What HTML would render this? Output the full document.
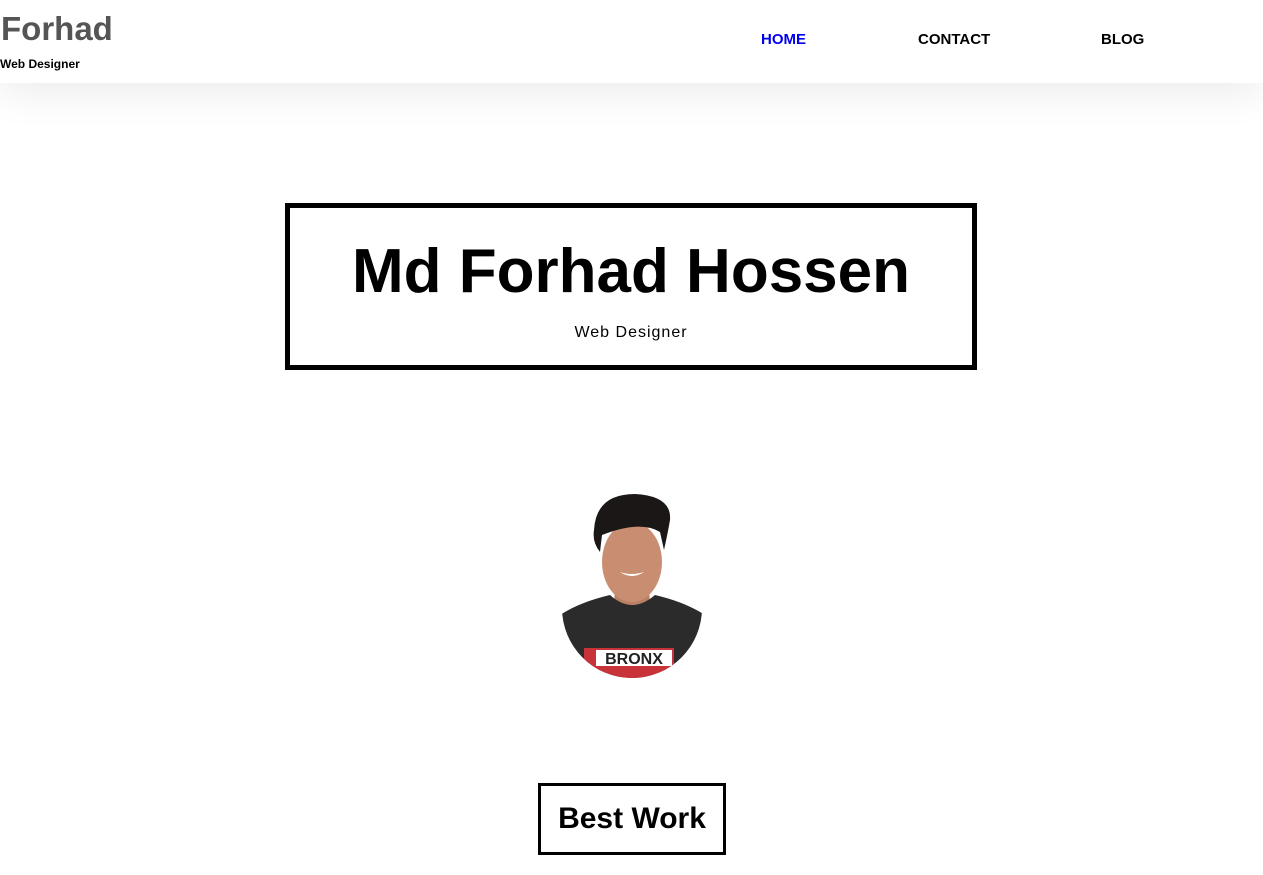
<!DOCTYPE html>
<html><head><style>
body{margin:0;background:#fff;font-family:"Liberation Sans",Arial,sans-serif;width:1263px;height:875px;overflow:hidden;position:relative}
.hdr{position:absolute;left:0;top:0;width:1263px;height:83px;background:#fff;box-shadow:0 10px 40px rgba(0,0,0,0.08)}
.logo{position:absolute;left:1px;top:10px;font-size:33px;font-weight:bold;color:#555}
.sub{position:absolute;left:0;top:57px;font-size:12px;font-weight:bold;color:#000}
.nav{position:absolute;top:31px;font-size:15px;font-weight:bold;color:#000}
.box{position:absolute;left:285px;top:203px;width:682px;height:157px;border:5px solid #000;text-align:center}
.box h1{margin:0;position:absolute;top:30px;width:100%;font-size:62px;line-height:68px}
.box p{margin:0;position:absolute;top:116px;width:100%;font-size:16px;letter-spacing:1px}
.bw{position:absolute;left:538px;top:783px;width:182px;height:66px;border:3px solid #000;text-align:center;font-size:30px;font-weight:bold;line-height:66px}
</style></head><body>
<div class="hdr">
<div class="logo">Forhad</div>
<div class="sub">Web Designer</div>
<div class="nav" style="left:761px;color:#0000ee">HOME</div>
<div class="nav" style="left:918px">CONTACT</div>
<div class="nav" style="left:1101px">BLOG</div>
</div>
<div class="box"><h1>Md Forhad Hossen</h1><p>Web Designer</p></div>
<svg style="position:absolute;left:560px;top:490px" width="145" height="192" viewBox="0 0 145 192">
<defs><clipPath id="c"><circle cx="72" cy="118" r="70"/></clipPath></defs>
<path d="M56 90 L54 112 Q72 124 90 112 L88 90Z" fill="#b98064"/>
<g clip-path="url(#c)">
<path d="M0 125 Q20 112 50 105 Q72 125 95 105 Q125 112 145 125 L145 192 L0 192Z" fill="#2b2b2b"/>
<rect x="24" y="158" width="90" height="30" fill="#c8333a"/>
<rect x="36" y="160" width="76" height="16" fill="#fff"/>
<text x="74" y="174" font-size="16" font-weight="bold" text-anchor="middle" fill="#222" font-family="Liberation Sans">BRONX</text>
</g>
<ellipse cx="72" cy="72" rx="30" ry="40" fill="#c98e72"/>
<path d="M34 40 Q36 4 75 4 Q112 6 110 30 Q108 42 104 60 L100 42 Q80 30 42 45 L40 62 Q32 52 34 40Z" fill="#1c1717"/>
<path d="M60 82 Q72 90 84 82 Q72 86 60 82Z" fill="#fff"/>
</svg>
<div class="bw">Best Work</div>
</body></html>
